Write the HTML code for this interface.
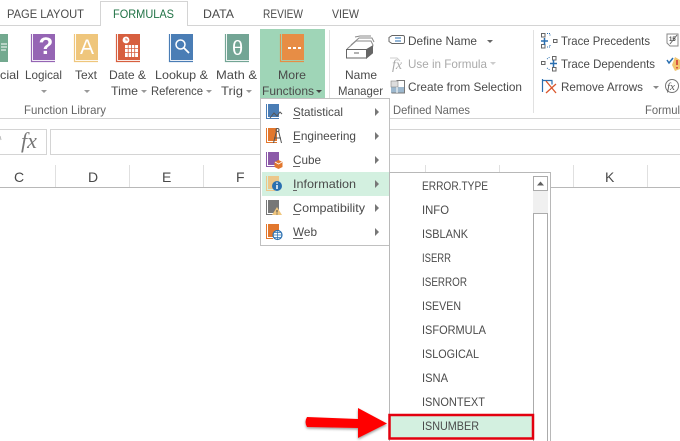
<!DOCTYPE html>
<html><head><meta charset="utf-8">
<style>
html,body{margin:0;padding:0;background:#fff;width:680px;height:441px;overflow:hidden}
svg{display:block}
text{font-family:"Liberation Sans",sans-serif;font-size:12px;fill:#4a4a4a}
</style></head><body>
<svg width="680" height="441" viewBox="0 0 680 441" xmlns="http://www.w3.org/2000/svg">
<defs><filter id="s" x="-10%" y="-30%" width="120%" height="170%"><feDropShadow dx="0" dy="1.5" stdDeviation="1.2" flood-color="#000" flood-opacity=".4"/></filter></defs>
<!-- tabs -->
<path d="M0 25.5H100.5V1.5H187.5V25.5H680" fill="none" stroke="#d4d4d4"/>
<text lengthAdjust="spacingAndGlyphs" x="7" y="18" textLength="77">PAGE LAYOUT</text>
<text lengthAdjust="spacingAndGlyphs" x="113" y="18" textLength="61" style="fill:#217346">FORMULAS</text>
<text lengthAdjust="spacingAndGlyphs" x="203" y="18" textLength="31">DATA</text>
<text lengthAdjust="spacingAndGlyphs" x="263" y="18" textLength="40">REVIEW</text>
<text lengthAdjust="spacingAndGlyphs" x="332" y="18" textLength="27">VIEW</text>
<!-- ribbon -->
<rect x="260" y="29" width="65" height="69" fill="#9fd5b7"/>
<path d="M0 118.500H680" stroke="#d4d4d4"/>
<path d="M329.500 30V113M533.500 30V113" stroke="#e1e1e1"/>
<!-- ribbon book icons -->
<g>
<rect x="0" y="34" width="8" height="28" fill="#73a98f"/><path d="M1 44h6M1 47h6M1 50h5" stroke="#fff"/>
<rect x="33" y="34" width="22" height="26" fill="#9565b4"/><path d="M31.500 34V61.500H55" fill="none" stroke="#9565b4" stroke-width="1.200"/>
<text x="38.500" y="54" style="font-size:24px;font-weight:bold;fill:#fff">?</text>
<rect x="76" y="34" width="22" height="26" fill="#efc67c"/><path d="M74.500 34V61.500H98" fill="none" stroke="#efc67c" stroke-width="1.200"/>
<text x="80" y="54" style="font-size:21px;fill:#fff">A</text>
<rect x="118" y="34" width="22" height="26" fill="#d75f3f"/><path d="M116.500 34V61.500H140" fill="none" stroke="#d75f3f" stroke-width="1.200"/>
<circle cx="126" cy="40" r="3.400" fill="#fff"/><path d="M126 38v2h2" stroke="#d75f3f" fill="none" stroke-width=".8"/>
<path d="M125 45h13v12h-13z" fill="#fff"/><path d="M128.200 45v12M131.500 45v12M134.700 45v12M125 48.500h13M125 52.500h13" stroke="#d75f3f" stroke-width=".8"/>
<rect x="171" y="34" width="22" height="26" fill="#4a7db5"/><path d="M169.500 34V61.500H193" fill="none" stroke="#4a7db5" stroke-width="1.200"/>
<circle cx="180.500" cy="44.500" r="4.500" fill="none" stroke="#fff" stroke-width="1.500"/><path d="M184 48l5 5" stroke="#fff" stroke-width="1.800"/>
<rect x="227" y="34" width="22" height="26" fill="#73a595"/><path d="M225.500 34V61.500H249" fill="none" stroke="#73a595" stroke-width="1.200"/>
<text x="232" y="55" style="font-size:20px;fill:#fff">θ</text>
<rect x="282" y="34" width="22" height="26" fill="#e78d45"/><path d="M280.500 34V61.500H304" fill="none" stroke="#e78d45" stroke-width="1.200"/>
<path d="M288 47h3v2h-3zM293 47h3v2h-3zM298 47h3v2h-3z" fill="#fff"/>
</g>
<!-- ribbon labels -->
<text lengthAdjust="spacingAndGlyphs" x="0" y="79" textLength="19">cial</text>
<text lengthAdjust="spacingAndGlyphs" x="25" y="79" textLength="37">Logical</text>
<text lengthAdjust="spacingAndGlyphs" x="75" y="79" textLength="22">Text</text>
<text lengthAdjust="spacingAndGlyphs" x="109" y="79" textLength="37">Date &amp;</text>
<text lengthAdjust="spacingAndGlyphs" x="155" y="79" textLength="53">Lookup &amp;</text>
<text lengthAdjust="spacingAndGlyphs" x="216" y="79" textLength="41">Math &amp;</text>
<text lengthAdjust="spacingAndGlyphs" x="278" y="79" textLength="28">More</text>
<text lengthAdjust="spacingAndGlyphs" x="111" y="95" textLength="27">Time</text>
<text lengthAdjust="spacingAndGlyphs" x="151" y="95" textLength="52">Reference</text>
<text lengthAdjust="spacingAndGlyphs" x="221" y="95" textLength="22">Trig</text>
<text lengthAdjust="spacingAndGlyphs" x="262" y="95" textLength="52">Functions</text>
<path d="M41 90h6l-3 3zM84 90h6l-3 3zM141 90h6l-3 3zM206 90h6l-3 3zM246 90h6l-3 3z" fill="#999"/>
<path d="M316 90h6l-3 3z" fill="#444"/>
<text lengthAdjust="spacingAndGlyphs" x="24" y="114" textLength="82" style="fill:#666">Function Library</text>
<!-- Name manager -->
<g fill="none" stroke="#8a8a8a">
<path d="M347 49l9-8h15l2 4-1 4"/><path d="M351 45l8-7h13l2 4"/>
<path d="M355 37l5-1h11"/>
</g>
<path d="M346.500 49.500h20v8.500h-20z" fill="#fff" stroke="#666"/><path d="M366.500 58l6-5v-7l-6 3.500z" fill="#666" stroke="#666"/><path d="M354 53h5" stroke="#666"/>
<text lengthAdjust="spacingAndGlyphs" x="345" y="79" textLength="32">Name</text>
<text lengthAdjust="spacingAndGlyphs" x="338" y="95" textLength="45">Manager</text>
<path d="M392 35.500h11a1.500 1.500 0 0 1 1.500 1.500v5a1.500 1.500 0 0 1-1.500 1.500h-11l-3-2v-4z" fill="none" stroke="#666"/>
<path d="M395 38h6M395 41h6" stroke="#2a6fb0"/>
<text lengthAdjust="spacingAndGlyphs" x="408" y="45" textLength="69">Define Name</text>
<path d="M487 40h6l-3 3z" fill="#666"/>
<text x="392" y="69" style="font-size:14px;font-style:italic;font-family:'Liberation Serif',serif;fill:#aaa">fx</text>
<path d="M390 58h7l3 3" fill="none" stroke="#ccc"/>
<text lengthAdjust="spacingAndGlyphs" x="408" y="68" textLength="79" style="fill:#aaa">Use in Formula</text>
<path d="M490 62h6l-3 3z" fill="#ccc"/>
<rect x="391" y="87" width="13" height="6" fill="#9db8ce"/><rect x="391" y="81" width="7" height="6" fill="#ddd" stroke="#888" stroke-width=".6"/><path d="M396.500 80.500h8v12.500h-13" fill="none" stroke="#777"/><path d="M397 87v6" stroke="#fff"/>
<text lengthAdjust="spacingAndGlyphs" x="408" y="91" textLength="114">Create from Selection</text>
<text lengthAdjust="spacingAndGlyphs" x="393" y="114" textLength="77" style="fill:#666">Defined Names</text>
<!-- Formula auditing -->
<g fill="none" stroke="#666">
<rect x="541.500" y="33.500" width="3.500" height="3.500"/><rect x="541.500" y="44.500" width="3.500" height="3.500"/><rect x="553.500" y="39.500" width="3.500" height="3"/>
<rect x="541.500" y="61.500" width="3.500" height="3"/><rect x="552.500" y="56.500" width="3.500" height="3.500"/><rect x="552.500" y="67.500" width="3.500" height="3.500"/>
</g>
<path d="M541 41h7M544.500 38v7" stroke="#2a6fb0" stroke-width="1.500"/>
<path d="M547 33.500h3v2M550 45v2h-3" fill="none" stroke="#2a6fb0" stroke-dasharray="1 1"/>
<path d="M550 63.500h7M553.500 60v7" stroke="#2a6fb0" stroke-width="1.500"/>
<path d="M547 59l3-2M547 68l3 2" fill="none" stroke="#2a6fb0" stroke-dasharray="1 1"/>
<path d="M542.500 79v13M542 80.500h10.500M552 80.500v4" fill="none" stroke="#2a6fb0" stroke-width="1.200"/>
<path d="M546 81l10 12M556 84l-10 9" stroke="#d9562c" stroke-width="1.300"/>
<text lengthAdjust="spacingAndGlyphs" x="561" y="45" textLength="89">Trace Precedents</text>
<text lengthAdjust="spacingAndGlyphs" x="561" y="68" textLength="94">Trace Dependents</text>
<text lengthAdjust="spacingAndGlyphs" x="561" y="91" textLength="82">Remove Arrows</text>
<path d="M653 86h6l-3 3z" fill="#888"/>
<path d="M667 34h11v12h-8l-3-3z" fill="#fff" stroke="#888"/><path d="M670 44l7-9" stroke="#666"/>
<text x="669" y="41" style="font-size:6px;font-weight:bold">15</text>
<path d="M667 60l2 3 4-5" fill="none" stroke="#2a6fb0" stroke-width="1.500"/>
<path d="M675 57l5 3v9l-5 2-3-6z" fill="#f2c56f"/><path d="M677 60v5M677 67v1.500" stroke="#c33" stroke-width="1.500"/>
<circle cx="672" cy="86" r="6.500" fill="none" stroke="#777"/>
<text x="667" y="90" style="font-size:11px;font-style:italic;font-family:'Liberation Serif',serif;fill:#555">fx</text>
<text lengthAdjust="spacingAndGlyphs" x="645" y="114" textLength="35" style="fill:#666">Formul</text>
<!-- formula bar -->
<path d="M0 129.500H46.500V154.500H0M680 129.500H50.500V154.500H680" fill="none" stroke="#d4d4d4"/>
<path d="M0 136l1 4" stroke="#bbb"/>
<text x="21" y="148" style="font-family:'Liberation Serif',serif;font-style:italic;font-size:22px;fill:#777">fx</text>
<!-- col headers -->
<path d="M0 187.500H680" stroke="#b8b8b8"/>
<path d="M55.500 165V187M129.500 165V187M203.500 165V187M277.500 165V187M351.500 165V187M425.500 165V187M499.500 165V172M573.500 165V187M647.500 165V187" stroke="#e0e0e0"/>
<text x="14" y="182" style="font-size:14px">C</text>
<text x="88" y="182" style="font-size:14px">D</text>
<text x="162" y="182" style="font-size:14px">E</text>
<text x="236" y="182" style="font-size:14px">F</text>
<text x="605" y="182" style="font-size:14px">K</text>
<!-- menu -->
<rect x="260.500" y="98.500" width="129" height="147" fill="#fff" stroke="#c0c0c0"/>
<rect x="262" y="172" width="127" height="24" fill="#d3f0e0"/>
<g>
<!-- Statistical -->
<rect x="268" y="104" width="11" height="13" fill="#4a7db5"/><path d="M266.500 104V118.500H279" fill="none" stroke="#4a7db5"/>
<path d="M270 118l4-5 3 3 3-4 2 2" fill="none" stroke="#555"/>
<!-- Engineering -->
<rect x="268" y="128" width="9" height="13" fill="#e2772d"/><path d="M266.500 128V142.500H277" fill="none" stroke="#e2772d"/>
<circle cx="277.500" cy="130" r="1.500" fill="none" stroke="#555"/><path d="M276.500 131l-3 12M278.500 131l3 12M274 138h7" fill="none" stroke="#555"/>
<!-- Cube -->
<rect x="268" y="152" width="11" height="13" fill="#8c5aa8"/><path d="M266.500 152V166.500H276" fill="none" stroke="#8c5aa8"/>
<path d="M278.500 160l4 2v5l-4 2-4-2v-5z" fill="#e2772d"/><path d="M275 162l3.500 2 3.500-2" stroke="#fff" fill="none" stroke-width=".8"/>
<!-- Information -->
<rect x="268" y="176" width="11" height="13" fill="#ecc78a"/><path d="M266.500 176V190.500H275" fill="none" stroke="#ecc78a"/>
<circle cx="277" cy="186" r="5" fill="#2a6fb0"/><path d="M277 185v4M277 182.500v1.300" stroke="#fff" stroke-width="1.500"/>
<!-- Compatibility -->
<rect x="268" y="200" width="11" height="13" fill="#777"/><path d="M266.500 200V214.500H273" fill="none" stroke="#777"/>
<path d="M277 207l5 8h-10z" fill="#f0c67e"/><path d="M277 210v2.500M277 213.500v1" stroke="#444"/>
<!-- Web -->
<rect x="268" y="224" width="11" height="13" fill="#e2772d"/><path d="M266.500 224V238.500H273" fill="none" stroke="#e2772d"/>
<circle cx="277.500" cy="235" r="4.500" fill="#fff" stroke="#2a6fb0" stroke-width="1.200"/><path d="M273.500 235h8M277.500 231v8M274.500 232.500h6M274.500 237.500h6" stroke="#2a6fb0" stroke-width=".7"/>
</g>
<text lengthAdjust="spacingAndGlyphs" x="293" y="116" textLength="50">Statistical</text>
<text lengthAdjust="spacingAndGlyphs" x="293" y="140" textLength="63">Engineering</text>
<text lengthAdjust="spacingAndGlyphs" x="293" y="164" textLength="28">Cube</text>
<text lengthAdjust="spacingAndGlyphs" x="293" y="188" textLength="63">Information</text>
<text lengthAdjust="spacingAndGlyphs" x="293" y="212" textLength="72">Compatibility</text>
<text lengthAdjust="spacingAndGlyphs" x="293" y="236" textLength="24">Web</text>
<path d="M293 118.500h7M293 142.500h7M293 166.500h7M293 190.500h4M293 214.500h7M293 238.500h10" stroke="#666"/>
<path d="M375 108l4 4-4 4zM375 132l4 4-4 4zM375 156l4 4-4 4zM375 180l4 4-4 4zM375 204l4 4-4 4zM375 228l4 4-4 4z" fill="#777"/>
<!-- submenu -->
<rect x="389.500" y="172.500" width="161" height="270" fill="#fff" stroke="#b8b8b8"/>
<rect x="533" y="176" width="15" height="37" fill="#f0f0f0"/>
<rect x="533.500" y="176.500" width="14" height="14" fill="#fff" stroke="#ababab"/>
<path d="M537 185.500l3.500-4 3.500 4z" fill="#606060"/>
<path d="M533.500 441V213.500H547.500V441" fill="#fff" stroke="#ababab"/>
<text lengthAdjust="spacingAndGlyphs" x="422" y="190" textLength="66">ERROR.TYPE</text>
<text lengthAdjust="spacingAndGlyphs" x="422" y="214" textLength="27">INFO</text>
<text lengthAdjust="spacingAndGlyphs" x="422" y="238" textLength="46">ISBLANK</text>
<text lengthAdjust="spacingAndGlyphs" x="422" y="262" textLength="29">ISERR</text>
<text lengthAdjust="spacingAndGlyphs" x="422" y="286" textLength="45">ISERROR</text>
<text lengthAdjust="spacingAndGlyphs" x="422" y="310" textLength="39">ISEVEN</text>
<text lengthAdjust="spacingAndGlyphs" x="422" y="334" textLength="64">ISFORMULA</text>
<text lengthAdjust="spacingAndGlyphs" x="422" y="358" textLength="57">ISLOGICAL</text>
<text lengthAdjust="spacingAndGlyphs" x="422" y="382" textLength="26">ISNA</text>
<text lengthAdjust="spacingAndGlyphs" x="422" y="406" textLength="63">ISNONTEXT</text>
<rect x="389.500" y="415" width="143.500" height="23.500" fill="#d3f0e0" stroke="#e3000f" stroke-width="2.500"/>
<text lengthAdjust="spacingAndGlyphs" x="422" y="430" textLength="57">ISNUMBER</text>
<!-- arrow -->
<path d="M307 417L358 419V408L387 423.500L358 438V428L307 427Q304 422 307 417Z" fill="#f00" filter="url(#s)"/>
</svg>
</body></html>
